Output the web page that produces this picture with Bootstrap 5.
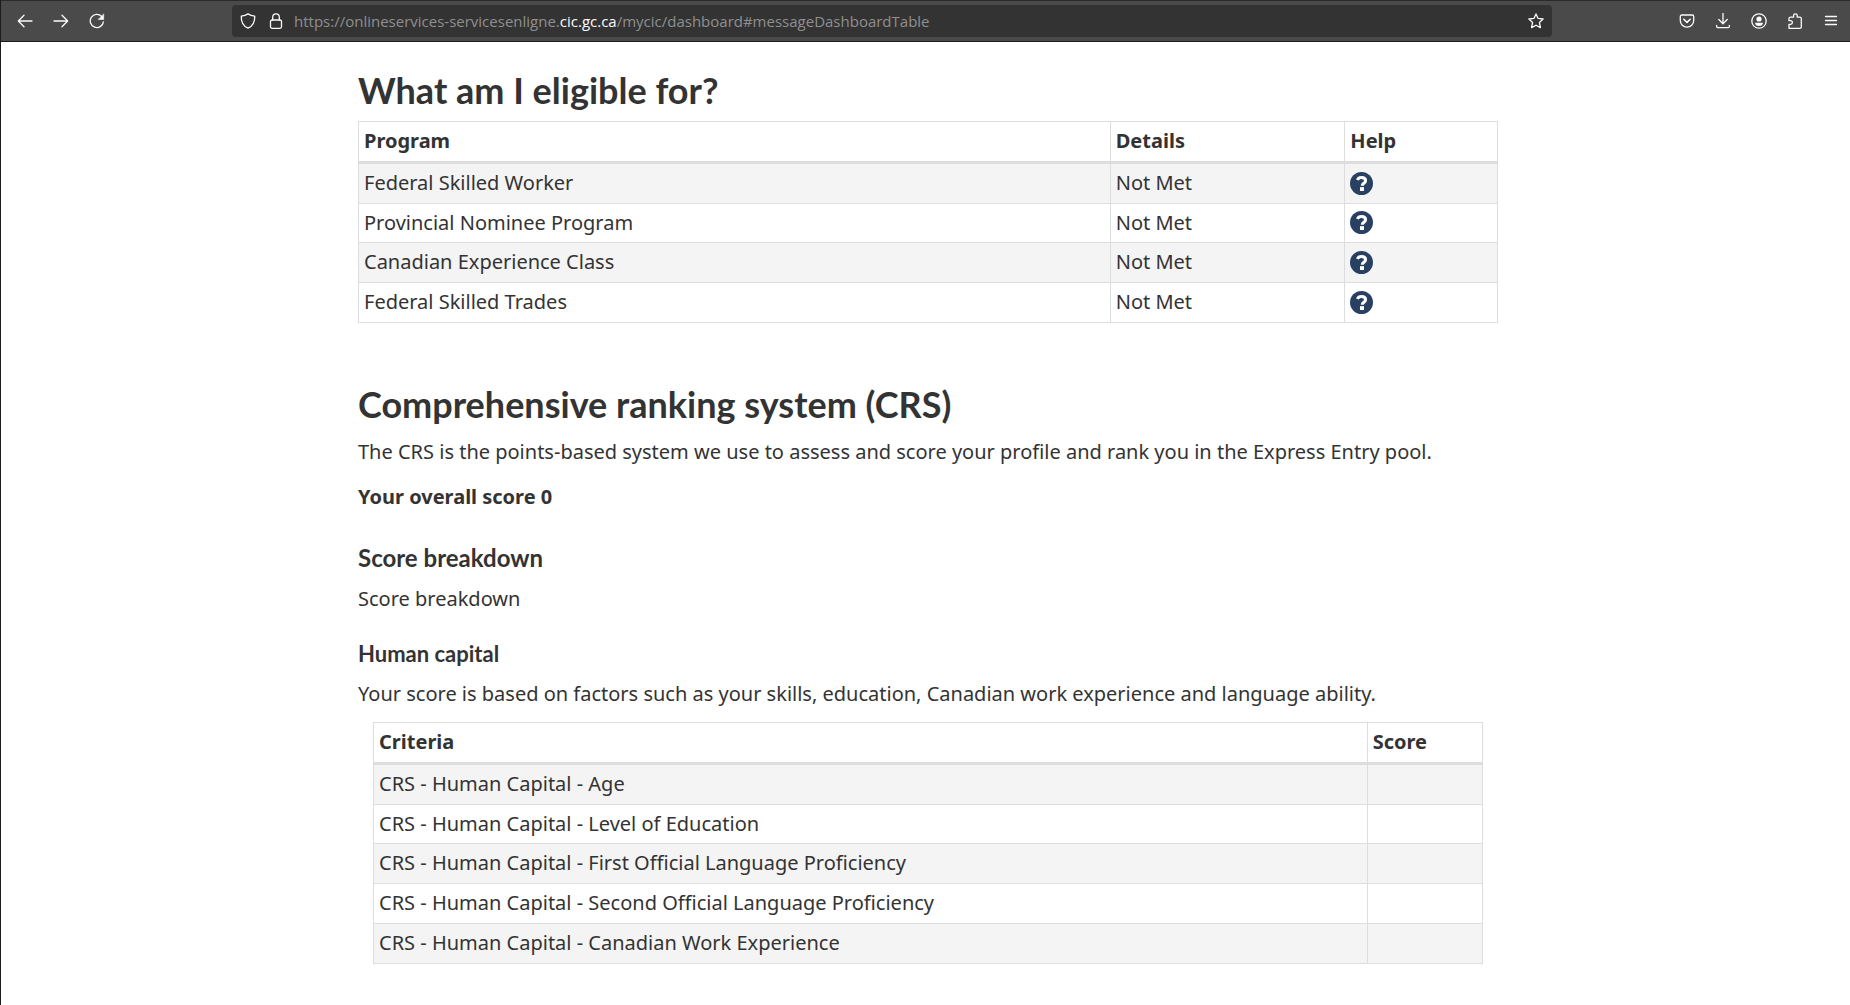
<!DOCTYPE html>
<html lang="en">
<head>
<meta charset="utf-8">
<meta name="viewport" content="width=device-width, initial-scale=1">
<title>Dashboard</title>
<link href="https://cdn.jsdelivr.net/npm/bootstrap@5.3.0/dist/css/bootstrap.min.css" rel="stylesheet">
<style>
body { font-family: "Noto Sans", sans-serif; font-size: 20px; line-height: 33px; color: #333; border-left: 1px solid #1b1b1b; }
.toolbar { height: 42px; background: #4a4a4a; border-top: 1px solid #2b2b2b; border-bottom: 1px solid #1b1b1b; padding: 0 1px 0 6px; }
.tool-btn { width: 36px; height: 32px; padding: 0; border: 0; background: none; color: #fbfbfe; }
.tool-btn svg, .url-icon { width: 16px; height: 16px; fill: none; stroke: currentColor; stroke-width: 1.3; stroke-linecap: round; stroke-linejoin: round; }
.spring { flex: 0 1 117px; }
.url-bar { height: 32px; background: #333; border-radius: 4px; color: #fbfbfe; padding-left: 8px; }
.url-bar .tool-btn { width: 32px; }
.url-icons { gap: 12px; margin-right: 10px; }
.url-text { font-family: "Open Sans", "Noto Sans", sans-serif; font-size: 15px; line-height: 24px; color: #8f8f8f; outline: 0; padding-bottom: 1px; }
.url-text b { font-weight: 400; color: #fbfbfe; }
.page-body { padding: 28px 0 40px 5px; }
.page-column { max-width: 1170px; padding: 0 15px; margin: 0 auto; }
h2, h3, h4 { font-family: Lato, sans-serif; font-weight: 700; color: #333; }
h2 { font-size: 36px; line-height: 40px; margin: 0 0 11px; }
h3 { font-size: 24px; line-height: 26px; margin: 32px 0 11px; }
h4 { font-size: 22px; line-height: 24px; margin: 27px 0 11px; }
p { margin: 0 0 12px; }
.grid-table { --bs-table-color: #333; --bs-table-striped-color: #333; --bs-table-striped-bg: #f4f4f4; --bs-border-color: #ddd; border-color: #ddd; table-layout: fixed; line-height: 1.44; margin: 0; }
.grid-table > :not(caption) > * > * { padding: 5px; vertical-align: middle; }
.grid-table > thead > tr > th { border-bottom: 3px solid #ddd; }
.crs-section { margin-top: 61px; }
.criteria-wrap { padding: 0 15px; }
.w-program { width: 66%; }
.w-details { width: 20.6%; }
.w-criteria { width: 89.6%; }
.help-link svg { width: 23px; height: 23px; }
</style>
</head>
<body class="min-vh-100">
<header class="toolbar d-flex align-items-center">
  <nav class="d-flex" aria-label="History">
    <button class="tool-btn d-flex align-items-center justify-content-center" type="button" aria-label="Back"><svg viewBox="0 0 16 16"><path d="M15 8H1.5M7 2.3 1.3 8 7 13.7"/></svg></button>
    <button class="tool-btn d-flex align-items-center justify-content-center" type="button" aria-label="Forward"><svg viewBox="0 0 16 16"><path d="M1 8h13.5M9 2.3 14.7 8 9 13.7"/></svg></button>
    <button class="tool-btn d-flex align-items-center justify-content-center" type="button" aria-label="Reload"><svg viewBox="0 0 16 16"><path d="M14.4 8.8A6.6 6.6 0 1 1 12.6 3.4"/><path d="M14.7 1.2v5.2H9.5z" fill="currentColor" stroke-width=".6"/></svg></button>
  </nav>
  <div class="spring"></div>
  <div class="url-bar d-flex align-items-center flex-grow-1">
    <div class="url-icons d-flex flex-shrink-0">
      <svg class="url-icon" viewBox="0 0 16 16"><path d="M8 .9C6 2.3 3.700 2.900 1.300 3.100 1 8.600 2.900 12.900 8 15.200c5.100-2.300 7-6.600 6.700-12.100C12.300 2.900 10 2.300 8 .9z"/></svg>
      <svg class="url-icon" viewBox="0 0 16 16"><rect x="2.500" y="7" width="11" height="8.300" rx="1.500"/><path d="M4.700 7V4.200a3.300 3.300 0 0 1 6.600 0V7"/></svg>
    </div>
    <div class="url-text flex-grow-1" role="textbox" aria-label="Address" contenteditable="true" spellcheck="false">https://onlineservices-servicesenligne.<b>cic.gc.ca</b>/mycic/dashboard#messageDashboardTable</div>
    <button class="tool-btn d-flex align-items-center justify-content-center" type="button" aria-label="Bookmark this page"><svg viewBox="0 0 16 16"><path d="M8 .9l2.100 4.500 5 .6-3.700 3.400 1 5.200L8 12.200l-4.400 2.400 1-5.200L.9 6l5-.6z"/></svg></button>
  </div>
  <div class="spring"></div>
  <div class="d-flex">
    <button class="tool-btn d-flex align-items-center justify-content-center" type="button" aria-label="Save to Pocket"><svg viewBox="0 0 16 16"><path d="M2.700 2h10.600c.8 0 1.400.6 1.400 1.400V7.500a6.700 6.700 0 0 1-13.400 0V3.400C1.300 2.600 1.900 2 2.700 2z"/><path d="M4.800 6.300 8 9.400l3.200-3.100" stroke-width="1.500"/></svg></button>
    <button class="tool-btn d-flex align-items-center justify-content-center" type="button" aria-label="Downloads"><svg viewBox="0 0 16 16"><path d="M8 .2V10.500M3.800 6.500 8 10.700l4.200-4.200M1.700 12.400v1c0 .8.500 1.300 1.300 1.300h10c.8 0 1.300-.5 1.300-1.300v-1"/></svg></button>
    <button class="tool-btn d-flex align-items-center justify-content-center" type="button" aria-label="Account"><svg viewBox="0 0 16 16"><circle cx="8" cy="8" r="7.200"/><circle cx="8" cy="6" r="2.600" fill="currentColor" stroke="none"/><path d="M4 9.700h8c0 2-1.700 3.300-4 3.300s-4-1.300-4-3.300z" fill="currentColor" stroke="none"/></svg></button>
    <button class="tool-btn d-flex align-items-center justify-content-center" type="button" aria-label="Extensions"><svg viewBox="0 0 16 16"><path d="M2 15.300h10.900c.8 0 1.400-.6 1.400-1.400V5.600c0-.8-.6-1.400-1.400-1.400H10.200V2.600a1.800 1.800 0 0 0-3.600 0v1.600H3.400C2.600 4.200 2 4.800 2 5.600v2.100h1.600a1.800 1.800 0 0 1 0 3.600H2z"/></svg></button>
    <button class="tool-btn d-flex align-items-center justify-content-center" type="button" aria-label="Menu"><svg viewBox="0 0 16 16"><path d="M2.500 3.500h11M2.500 7.500h11M2.500 11.500h11"/></svg></button>
  </div>
</header>

<svg class="d-none" aria-hidden="true"><symbol id="help" viewBox="0 0 24 24"><circle cx="12" cy="12" r="12" fill="#284162"/><path d="M7.800 8.300C8.500 6.500 10 5.800 12 5.800c2.500 0 4.200 1.200 4.200 3.200 0 2.700-3.400 2.800-3.400 5.400" fill="none" stroke="#fff" stroke-width="3.200"/><path d="M10.400 15.800h4.200v4h-4.200z" fill="#fff"/></symbol></svg>

<main class="page-body">
  <div class="page-column">
    <section>
      <h2>What am I eligible for?</h2>
      <table class="table table-bordered table-striped grid-table">
        <thead><tr><th scope="col" class="w-program">Program</th><th scope="col" class="w-details">Details</th><th scope="col">Help</th></tr></thead>
        <tbody>
          <tr><td>Federal Skilled Worker</td><td>Not Met</td><td><a class="help-link d-flex align-items-center" href="#" aria-label="Help: Federal Skilled Worker"><svg><use href="#help"/></svg></a></td></tr>
          <tr><td>Provincial Nominee Program</td><td>Not Met</td><td><a class="help-link d-flex align-items-center" href="#" aria-label="Help: Provincial Nominee Program"><svg><use href="#help"/></svg></a></td></tr>
          <tr><td>Canadian Experience Class</td><td>Not Met</td><td><a class="help-link d-flex align-items-center" href="#" aria-label="Help: Canadian Experience Class"><svg><use href="#help"/></svg></a></td></tr>
          <tr><td>Federal Skilled Trades</td><td>Not Met</td><td><a class="help-link d-flex align-items-center" href="#" aria-label="Help: Federal Skilled Trades"><svg><use href="#help"/></svg></a></td></tr>
        </tbody>
      </table>
    </section>
    <section class="crs-section">
      <h2>Comprehensive ranking system (CRS)</h2>
      <p>The CRS is the points-based system we use to assess and score your profile and rank you in the Express Entry pool.</p>
      <p><strong>Your overall score 0</strong></p>
      <h3>Score breakdown</h3>
      <p>Score breakdown</p>
      <h4>Human capital</h4>
      <p>Your score is based on factors such as your skills, education, Canadian work experience and language ability.</p>
      <div class="criteria-wrap">
        <table class="table table-bordered table-striped grid-table">
          <thead><tr><th scope="col" class="w-criteria">Criteria</th><th scope="col">Score</th></tr></thead>
          <tbody>
            <tr><td>CRS - Human Capital - Age</td><td></td></tr>
            <tr><td>CRS - Human Capital - Level of Education</td><td></td></tr>
            <tr><td>CRS - Human Capital - First Official Language Proficiency</td><td></td></tr>
            <tr><td>CRS - Human Capital - Second Official Language Proficiency</td><td></td></tr>
            <tr><td>CRS - Human Capital - Canadian Work Experience</td><td></td></tr>
          </tbody>
        </table>
      </div>
    </section>
  </div>
</main>
<script src="https://cdn.jsdelivr.net/npm/bootstrap@5.3.0/dist/js/bootstrap.bundle.min.js"></script>
</body>
</html>
